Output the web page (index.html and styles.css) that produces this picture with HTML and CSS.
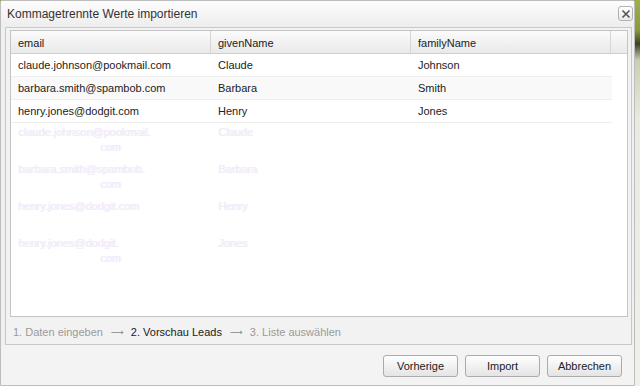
FILE: index.html
```html
<!DOCTYPE html>
<html>
<head>
<meta charset="utf-8">
<link rel="stylesheet" href="styles.css">
</head>
<body>
<div class="window">
  <div class="titlebar">
    <span class="title">Kommagetrennte Werte importieren</span>
    <span class="close">
      <svg width="10" height="10" viewBox="0 0 10 10"><path d="M1.5 1.5 L8.5 8.5 M8.5 1.5 L1.5 8.5" stroke="#555" stroke-width="1.6" fill="none"/></svg>
    </span>
  </div>
  <div class="panel">
    <div class="grid">
      <div class="ghead">
        <div class="hcell">email</div>
        <div class="hcell">givenName</div>
        <div class="hcell">familyName</div>
        <div class="hcell hfill"></div>
      </div>
      <div class="row"><div class="cell">claude.johnson@pookmail.com</div><div class="cell">Claude</div><div class="cell">Johnson</div></div>
      <div class="row alt"><div class="cell">barbara.smith@spambob.com</div><div class="cell">Barbara</div><div class="cell">Smith</div></div>
      <div class="row"><div class="cell">henry.jones@dodgit.com</div><div class="cell">Henry</div><div class="cell">Jones</div></div>
      <div class="ghosts">
        <div class="grow"><div class="gcell">claude.johnson@pookmail.<br><span class="gwrap">com</span></div><div class="gcell">Claude</div></div>
        <div class="grow"><div class="gcell">barbara.smith@spambob.<br><span class="gwrap">com</span></div><div class="gcell">Barbara</div></div>
        <div class="grow"><div class="gcell">henry.jones@dodgit.com</div><div class="gcell">Henry</div></div>
        <div class="grow"><div class="gcell">henry.jones@dodgit.<br><span class="gwrap">com</span></div><div class="gcell">Jones</div></div>
      </div>
    </div>
    <div class="steps">
      <span class="step">1. Daten eingeben</span>
      <span class="arrow">⟶</span>
      <span class="step active">2. Vorschau Leads</span>
      <span class="arrow">⟶</span>
      <span class="step">3. Liste auswählen</span>
    </div>
  </div>
  <div class="footer">
    <button class="btn">Vorherige</button>
    <button class="btn">Import</button>
    <button class="btn">Abbrechen</button>
  </div>
</div>
</body>
</html>
```
FILE: styles.css
```css
html, body {
  margin: 0;
  padding: 0;
}
body {
  width: 640px;
  height: 386px;
  overflow: hidden;
  background: linear-gradient(to bottom, #9fb04a 0px, #8a9a3c 30px, #3d4020 44px, #c9cfae 60px, #e9ebe0 120px, #eef0ea 386px);
  font-family: "Liberation Sans", Arial, sans-serif;
  font-size: 11px;
  color: #222;
}
.window {
  box-sizing: border-box;
  width: 635px;
  height: 386px;
  border: 1px solid #bdbdbd;
  border-radius: 3px 3px 0 0;
  background: #f0f0f0;
  display: flex;
  flex-direction: column;
}
.titlebar {
  box-sizing: border-box;
  height: 26px;
  padding: 0 1px 0 6px;
  display: flex;
  align-items: center;
  justify-content: space-between;
  background: linear-gradient(to bottom, #fdfdfd, #ededed);
}
.title {
  font-size: 12px;
  color: #333;
}
.close {
  box-sizing: border-box;
  width: 15px;
  height: 15px;
  margin-top: -1px;
  border: 1px solid #b3b3b3;
  border-radius: 3px;
  background: linear-gradient(to bottom, #ffffff, #e8e8e8);
  display: flex;
  align-items: center;
  justify-content: center;
}
.panel {
  box-sizing: border-box;
  margin: 0 2px 0 4px;
  height: 318px;
  border: 1px solid #c8c8c8;
  background: #f2f2f2;
  padding: 2px 3px 0 4px;
  display: flex;
  flex-direction: column;
}
.grid {
  box-sizing: border-box;
  height: 290px;
  border: 1px solid #c4c4c4;
  background: #ffffff;
  display: flex;
  flex-direction: column;
}
.ghead {
  display: flex;
  height: 22px;
  border-bottom: 1px solid #cfcfcf;
  background: linear-gradient(to bottom, #fbfbfb, #e9e9e9);
  flex-shrink: 0;
}
.hcell {
  box-sizing: border-box;
  width: 200px;
  padding-left: 7px;
  line-height: 24px;
  border-right: 1px solid #d6d6d6;
  color: #222;
}
.hcell.hfill {
  width: auto;
  flex: 1;
  border-right: none;
}
.row {
  display: flex;
  width: 601px;
  height: 22px;
  border-bottom: 1px solid #ededed;
  flex-shrink: 0;
}
.row.alt {
  background: #f9f9f9;
}
.cell {
  box-sizing: border-box;
  width: 200px;
  padding-left: 7px;
  line-height: 22px;
}
.ghosts {
  padding-top: 2px;
}
.grow {
  display: flex;
  height: 37px;
  color: #f6e8f8;
  text-shadow: 1px 0 0 #eaf4fc;
}
.gcell {
  box-sizing: border-box;
  width: 200px;
  padding-left: 7px;
  line-height: 15px;
}
.gwrap {
  padding-left: 82px;
}
.steps {
  height: 25px;
  display: flex;
  align-items: center;
  padding: 2px 0 0 3px;
  color: #9a9a9a;
}
.step.active {
  color: #1a1a1a;
}
.arrow {
  margin: 0 7px 0 8px;
  font-family: "DejaVu Sans", sans-serif;
  font-size: 9px;
  color: #8a8a8a;
}
.footer {
  flex: 1;
  display: flex;
  justify-content: flex-end;
  align-items: flex-start;
  gap: 7px;
  padding: 10px 12px 0 0;
  background: #f3f3f3;
}
.btn {
  box-sizing: border-box;
  width: 75px;
  height: 22px;
  border: 1px solid #ababab;
  border-radius: 3px;
  background: linear-gradient(to bottom, #ffffff, #e4e4e4);
  font-family: "Liberation Sans", Arial, sans-serif;
  font-size: 11px;
  color: #222;
  padding: 0;
}
```
